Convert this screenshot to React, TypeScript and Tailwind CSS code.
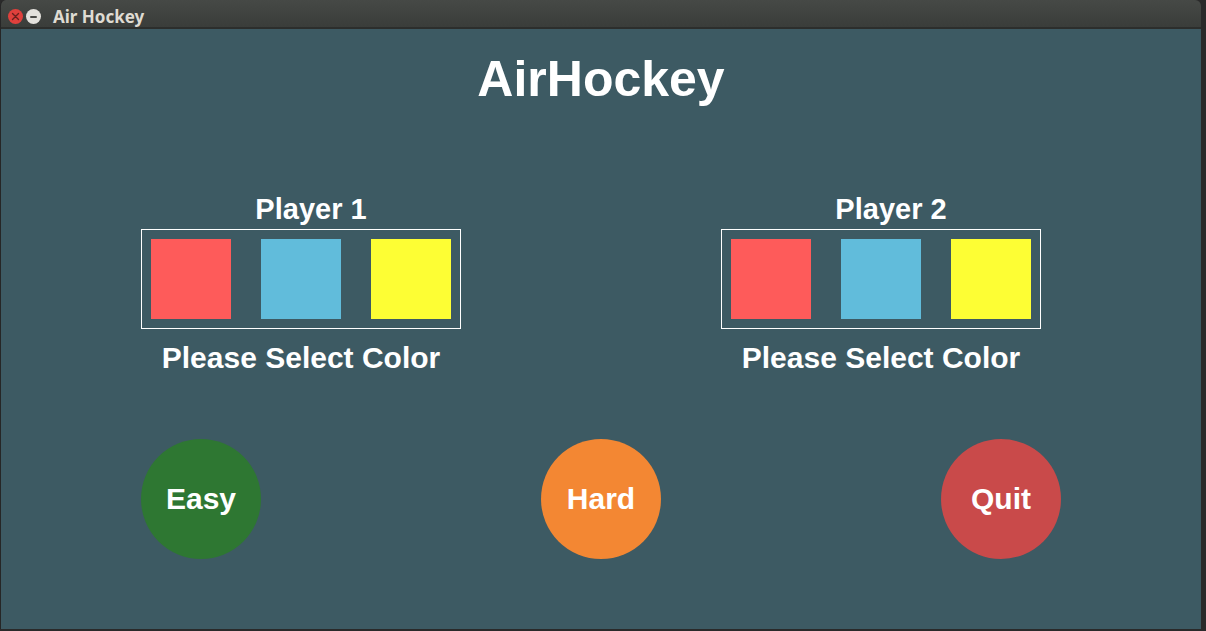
import React from "react";

function Swatches() {
  return (
    <div className="flex h-[100px] w-[320px] gap-[30px] border border-white p-[9px]">
      <div className="h-[80px] w-[80px] bg-[#fe5b5a]" />
      <div className="h-[80px] w-[80px] bg-[#61bcdb]" />
      <div className="h-[80px] w-[80px] bg-[#fdfe34]" />
    </div>
  );
}

function PlayerPanel({ name }: { name: string }) {
  return (
    <div className="flex w-[320px] flex-col items-center">
      <div className="pl-5 text-[29px] font-bold leading-none text-white">{name}</div>
      <div className="mt-[5px]">
        <Swatches />
      </div>
      <div className="mt-[14px] text-[30px] font-bold leading-none text-white">Please Select Color</div>
    </div>
  );
}

function RoundButton({ label, color }: { label: string; color: string }) {
  return (
    <div className={`flex h-[120px] w-[120px] items-center justify-center rounded-full ${color}`}>
      <span className="text-[30px] font-bold leading-none text-white">{label}</span>
    </div>
  );
}

export default function App() {
  return (
    <div
      className="flex h-[631px] w-[1206px] flex-col bg-[#2a2a2a]"
      style={{ fontFamily: '"Liberation Sans", Arial, sans-serif' }}
    >
      <div className="flex h-[629px] w-[1201px] flex-col overflow-hidden rounded-t-[6px] border-l border-[#262626]">
        {/* Title bar */}
        <div className="flex h-[29px] shrink-0 items-center border-b-2 border-[#2c2e2c] bg-gradient-to-b from-[#464946] to-[#3a3d3a] pl-[7px] pt-[6px]">
          <div className="flex h-[15px] w-[15px] items-center justify-center rounded-full bg-[#e0403c]">
            <svg width="9" height="9" viewBox="0 0 9 9">
              <path d="M1.5 1.5 L7.5 7.5 M7.5 1.5 L1.5 7.5" stroke="#6b1f1d" strokeWidth="1.4" strokeLinecap="round" />
            </svg>
          </div>
          <div className="ml-[3px] flex h-[15px] w-[15px] items-center justify-center rounded-full bg-[#e3e1dc]">
            <div className="h-[2px] w-[7px] rounded bg-[#4a4a47]" />
          </div>
          <span
            className="ml-[12px] text-[17px] font-bold leading-none text-[#dfdbd2]"
            style={{ fontFamily: '"Noto Sans", "Open Sans", sans-serif' }}
          >
            Air Hockey
          </span>
        </div>

        {/* Content */}
        <div className="flex flex-1 flex-col bg-[#3d5a63]">
          <div className="mt-[25px] text-center text-[50px] font-bold leading-none text-white">AirHockey</div>

          <div className="mt-[91px] flex gap-[260px] pl-[140px]">
            <PlayerPanel name="Player 1" />
            <PlayerPanel name="Player 2" />
          </div>

          <div className="mt-[66px] flex gap-[280px] pl-[140px]">
            <RoundButton label="Easy" color="bg-[#2e7732]" />
            <RoundButton label="Hard" color="bg-[#f38733]" />
            <RoundButton label="Quit" color="bg-[#c94a4a]" />
          </div>
        </div>
      </div>
    </div>
  );
}
